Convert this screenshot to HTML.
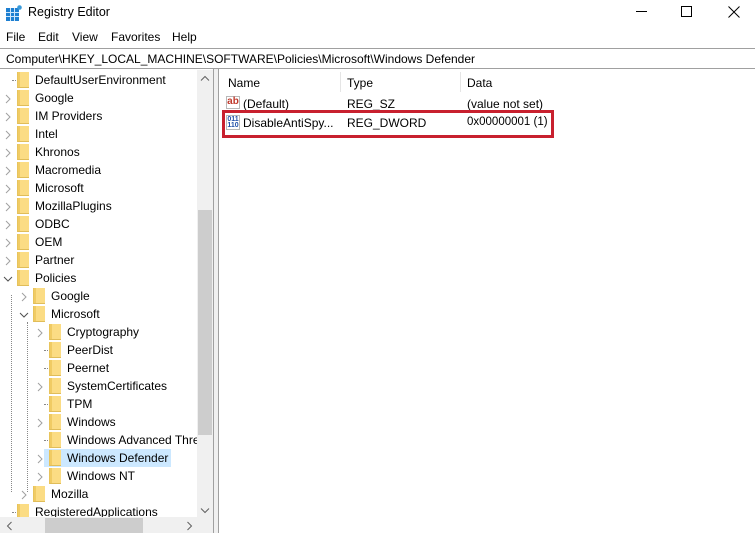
<!DOCTYPE html>
<html><head><meta charset="utf-8"><style>
*{margin:0;padding:0;box-sizing:border-box}
body{width:755px;height:533px;overflow:hidden;background:#fff;font-family:"Liberation Sans",sans-serif;font-size:12px;color:#000;position:relative}
.a{position:absolute;white-space:nowrap}
.f{position:absolute;width:12px;height:16px;background:#fbdc84;border-left:1px solid #e8c45c;border-bottom:1px solid #e0bd5a}
.f:after{content:"";position:absolute;left:0;top:0;width:2px;height:15px;background:#f0cb64}
.c{position:absolute;color:#a0a0a0}
.d{position:absolute;border-top:1px dotted #888;width:8px}
</style></head><body>
<svg class="a" style="left:6px;top:5px" width="16" height="16" viewBox="0 0 16 16">
<rect x="0" y="3" width="13" height="13" fill="#1d7fd1"/>
<g stroke="#cfe6fa" stroke-width="1"><line x1="0" y1="7.5" x2="13" y2="7.5"/><line x1="0" y1="11.5" x2="13" y2="11.5"/><line x1="4.5" y1="3" x2="4.5" y2="16"/><line x1="8.5" y1="3" x2="8.5" y2="16"/></g>
<circle cx="13.5" cy="2.5" r="2.3" fill="#3a9ad9"/></svg>
<div class="a" style="left:28px;top:5px;font-size:12.5px">Registry Editor</div>
<div class="a" style="left:636px;top:11px;width:11px;height:1px;background:#000"></div>
<div class="a" style="left:681px;top:6px;width:11px;height:11px;border:1px solid #000"></div>
<svg class="a" style="left:728px;top:6px" width="12" height="12"><path d="M0.5 0.5L11.5 11.5M11.5 0.5L0.5 11.5" stroke="#000" stroke-width="1"/></svg>
<div class="a" style="left:6px;top:30px">File</div>
<div class="a" style="left:38px;top:30px">Edit</div>
<div class="a" style="left:72px;top:30px">View</div>
<div class="a" style="left:111px;top:30px">Favorites</div>
<div class="a" style="left:172px;top:30px">Help</div>
<div class="a" style="left:0;top:48px;width:755px;height:1px;background:#a0a0a0"></div>
<div class="a" style="left:6px;top:52px">Computer\HKEY_LOCAL_MACHINE\SOFTWARE\Policies\Microsoft\Windows Defender</div>
<div class="a" style="left:0;top:68px;width:755px;height:1px;background:#a0a0a0"></div>
<div class="a" style="left:44px;top:449px;width:127px;height:18px;background:#cce8ff"></div>
<div class="a" style="left:11px;top:295px;height:197px;border-left:1px dotted #888"></div>
<div class="a" style="left:27px;top:322px;height:170px;border-left:1px dotted #888"></div>
<div id="tree"></div>
<div class="a" style="left:197px;top:70px;width:16px;height:447px;background:#f0f0f0"></div>
<div class="a" style="left:198px;top:210px;width:14px;height:225px;background:#cdcdcd"></div>
<svg class="a" style="left:200px;top:75px" width="10" height="7"><path d="M1 5.5L5 1.5L9 5.5" stroke="#606060" fill="none"/></svg>
<svg class="a" style="left:200px;top:507px" width="10" height="7"><path d="M1 1.5L5 5.5L9 1.5" stroke="#606060" fill="none"/></svg>
<div class="a" style="left:0;top:517px;width:213px;height:16px;background:#f0f0f0"></div>
<div class="a" style="left:45px;top:518px;width:98px;height:15px;background:#cdcdcd"></div>
<svg class="a" style="left:6px;top:521px" width="7" height="10"><path d="M5.5 1L1.5 5L5.5 9" stroke="#606060" fill="none"/></svg>
<svg class="a" style="left:186px;top:521px" width="7" height="10"><path d="M1.5 1L5.5 5L1.5 9" stroke="#606060" fill="none"/></svg>
<div class="a" style="left:213px;top:69px;width:1px;height:464px;background:#a0a0a0"></div>
<div class="a" style="left:218px;top:69px;width:1px;height:464px;background:#a0a0a0"></div>
<div class="a" style="left:214px;top:69px;width:4px;height:464px;background:#f0f0f0"></div>
<div class="a" style="left:228px;top:76px">Name</div>
<div class="a" style="left:340px;top:72px;width:1px;height:20px;background:#e5e5e5"></div>
<div class="a" style="left:347px;top:76px">Type</div>
<div class="a" style="left:460px;top:72px;width:1px;height:20px;background:#e5e5e5"></div>
<div class="a" style="left:467px;top:76px">Data</div>
<div class="a" style="left:226px;top:96px;width:14px;height:13px;border:1px solid #b8b8b8;color:#c0392b;font-size:10px;font-weight:bold;line-height:10px;text-align:center">ab</div>
<div class="a" style="left:243px;top:97px">(Default)</div>
<div class="a" style="left:347px;top:97px">REG_SZ</div>
<div class="a" style="left:467px;top:97px">(value not set)</div>
<div class="a" style="left:226px;top:115px;width:14px;height:15px;border:1px solid #b8b8b8;color:#1f4fa8;font-size:7px;font-weight:bold;line-height:6px;text-align:center;padding-top:1px">011<br>110</div>
<div class="a" style="left:243px;top:116px">DisableAntiSpy...</div>
<div class="a" style="left:347px;top:116px">REG_DWORD</div>
<div class="a" style="left:467px;top:116px;font-size:11.5px">0x00000001 (1)</div>
<div class="a" style="left:222px;top:110px;width:332px;height:28px;border:3px solid #c8202e"></div>
<script>
var rows=[
[0,"DefaultUserEnvironment",0],[0,"Google",1],[0,"IM Providers",1],[0,"Intel",1],[0,"Khronos",1],[0,"Macromedia",1],[0,"Microsoft",1],[0,"MozillaPlugins",1],[0,"ODBC",1],[0,"OEM",1],[0,"Partner",1],[0,"Policies",2],
[1,"Google",1],[1,"Microsoft",2],[2,"Cryptography",1],[2,"PeerDist",0],[2,"Peernet",0],[2,"SystemCertificates",1],[2,"TPM",0],[2,"Windows",1],[2,"Windows Advanced Thre",0],[2,"Windows Defender",1],[2,"Windows NT",1],[1,"Mozilla",1],[0,"RegisteredApplications",0]];
var h="";
rows.forEach(function(r,i){var y=71+18*i,l=r[0]*16;
if(r[2]==1)h+='<svg class="a" style="left:'+(5+l)+'px;top:'+(y+5)+'px" width="6" height="10"><path d="M1 1L5 5L1 9" stroke="#a0a0a0" fill="none"/></svg>';
else if(r[2]==2)h+='<svg class="a" style="left:'+(3+l)+'px;top:'+(y+7)+'px" width="10" height="6"><path d="M1 1L5 5L9 1" stroke="#505050" fill="none"/></svg>';
else h+='<div class="d" style="left:'+(12+l)+'px;top:'+(y+9)+'px"></div>';
h+='<div class="f" style="left:'+(17+l)+'px;top:'+(y+1)+'px"></div>';
h+='<div class="a" style="left:'+(35+l)+'px;top:'+(y+2)+'px;width:'+(197-35-l)+'px;overflow:hidden">'+r[1]+'</div>';});
document.getElementById("tree").innerHTML=h;
</script>
</body></html>
